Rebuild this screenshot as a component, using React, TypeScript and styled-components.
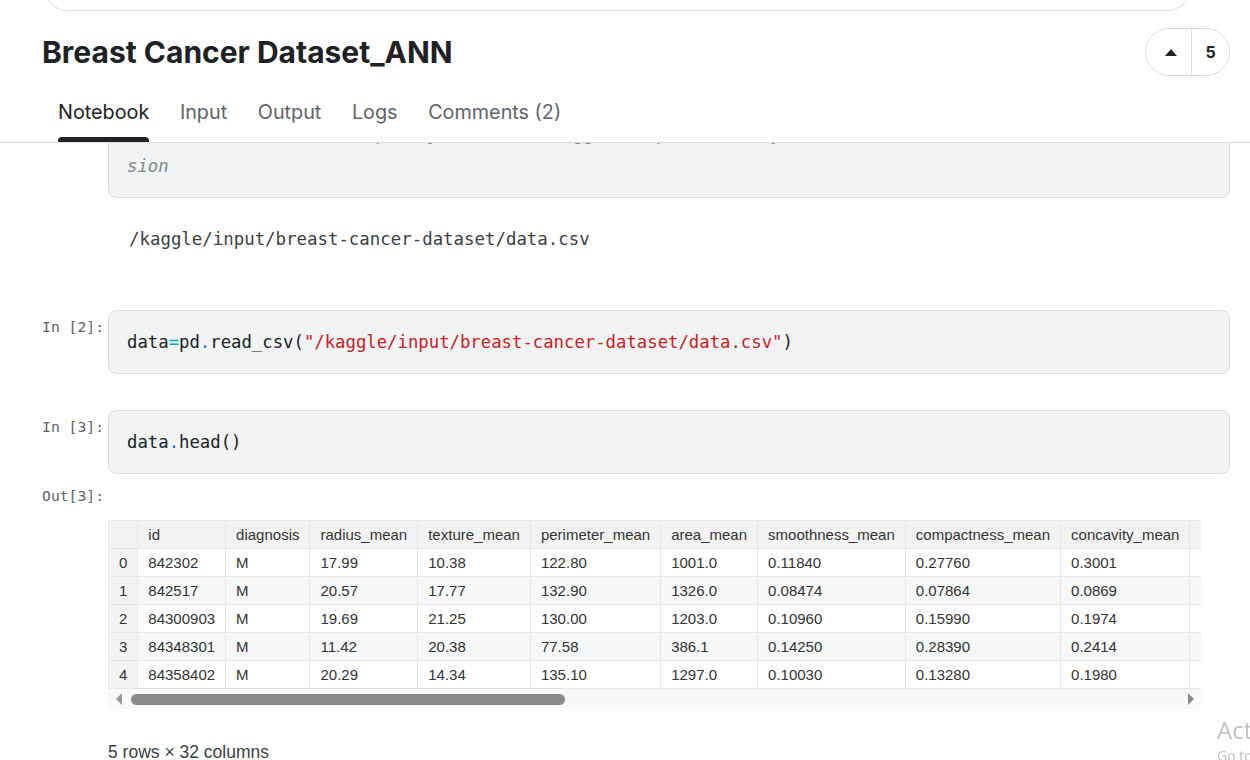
import React from "react";
import styled, { createGlobalStyle } from "styled-components";

const GlobalStyle = createGlobalStyle`
  html, body {
    margin: 0;
    padding: 0;
    background: #ffffff;
    overflow: hidden;
  }
  body {
    font-family: Inter, "Noto Sans", Arial, sans-serif;
    color: #202124;
  }
`;

const Page = styled.div`
  height: 760px;
  display: flex;
  flex-direction: column;
  overflow: hidden;
`;

const Header = styled.header`
  flex-shrink: 0;
  padding: 0 20px 0 42px;
  border-bottom: 1px solid #dadce0;
`;

const SearchBar = styled.div`
  height: 40px;
  margin: -30px 40px 0 3px;
  border: 1px solid #dadce0;
  border-top: none;
  border-radius: 0 0 22px 22px;
`;

const TitleRow = styled.div`
  margin-top: 17px;
  height: 48px;
  display: flex;
  align-items: center;
  justify-content: space-between;
`;

const Title = styled.h1`
  margin: 0;
  font-size: 30px;
  font-weight: 700;
  color: #202124;
`;

const VoteButton = styled.div`
  display: flex;
  height: 46px;
  border: 1px solid #dadce0;
  border-radius: 24px;
  overflow: hidden;
`;

const VoteHalf = styled.div<{ $wide?: boolean }>`
  width: ${(p) => (p.$wide ? "45px" : "37px")};
  display: flex;
  align-items: center;
  justify-content: center;
  font-size: 16px;
  font-weight: 700;
  color: #202124;
  & + & {
    border-left: 1px solid #dadce0;
  }
`;

const UpTriangle = styled.span`
  width: 0;
  height: 0;
  border-left: 6px solid transparent;
  border-right: 6px solid transparent;
  border-bottom: 7px solid #202124;
  margin-left: 4px;
`;

const Tabs = styled.nav`
  display: flex;
  gap: 30.6px;
  padding-left: 16px;
  height: 66px;
`;

const Tab = styled.div<{ $active?: boolean }>`
  position: relative;
  padding-top: 22px;
  line-height: 28px;
  font-size: 19.8px;
  color: ${(p) => (p.$active ? "#202124" : "#5f6368")};
  &::after {
    content: "";
    display: ${(p) => (p.$active ? "block" : "none")};
    position: absolute;
    left: 0;
    right: 0;
    bottom: 0;
    height: 5px;
    border-radius: 4px 4px 0 0;
    background: #202124;
  }
`;

const Main = styled.main`
  flex: 1;
  overflow: hidden;
`;

/* the notebook is scrolled a little: the first cell sits under the header */
const Scrolled = styled.div`
  margin-top: -37px;
  padding-right: 20px;
`;

const Row = styled.div<{ $gap?: number }>`
  display: flex;
  align-items: flex-start;
  margin-top: ${(p) => p.$gap ?? 0}px;
`;

const Prompt = styled.div`
  width: 104px;
  flex-shrink: 0;
  padding: 7px 4px 0 0;
  text-align: right;
  font-family: "DejaVu Sans Mono", "Liberation Mono", monospace;
  font-size: 14.7px;
  line-height: 20px;
  color: #5f6368;
  white-space: pre;
`;

const CodeCell = styled.div<{ $tight?: boolean }>`
  flex: 1;
  min-width: 0;
  background: #f1f3f4;
  border: 1px solid #dadce0;
  border-radius: 8px;
  padding: ${(p) => (p.$tight ? "13px 18px 17px" : "17px 18px")};
  font-family: "DejaVu Sans Mono", "Liberation Mono", monospace;
  font-size: 17.3px;
  line-height: 28px;
  color: #202124;
  white-space: pre;
  overflow: hidden;
`;

const CommentLine = styled.div<{ $lead?: boolean }>`
  color: #80868b;
  font-style: italic;
  margin-bottom: ${(p) => (p.$lead ? "4px" : "0")};
`;

const Op = styled.span`
  color: #12a4b8;
`;

const Dot = styled.span`
  color: #1a73e8;
`;

const Str = styled.span`
  color: #c5221f;
`;

const StreamText = styled.div`
  padding: 27px 0 0 21px;
  font-family: "DejaVu Sans Mono", "Liberation Mono", monospace;
  font-size: 17.4px;
  line-height: 28px;
  color: #3c4043;
  white-space: pre;
`;

const OutputBody = styled.div`
  flex: 1;
  min-width: 0;
  padding-top: 41px;
  margin-right: 29px;
`;

const TableScroll = styled.div`
  overflow: hidden;
`;

const Table = styled.table`
  border-collapse: collapse;
  font-family: "Liberation Sans", Arial, sans-serif;
  font-size: 15px;
  color: #333333;
  white-space: nowrap;

  th,
  td {
    height: 27px;
    padding: 0 10px;
    border: 1px solid #e6e6e6;
    text-align: left;
    font-weight: 400;
  }
  th:last-child,
  td:last-child {
    padding-left: 14px;
  }
  thead th {
    background: #f3f3f3;
  }
  tbody th {
    background: #f3f3f3;
  }
  tbody tr:nth-child(even) td {
    background: #f6f7f9;
  }
  tbody tr:nth-child(odd) td {
    background: #ffffff;
  }
`;

const ScrollTrack = styled.div`
  height: 20px;
  background: #f9f9f9;
  display: flex;
  align-items: center;
  padding: 0 7px 0 8px;
`;

const Arrow = styled.span<{ $dir: "left" | "right" }>`
  width: 0;
  height: 0;
  border-top: 6px solid transparent;
  border-bottom: 6px solid transparent;
  ${(p) =>
    p.$dir === "left"
      ? "border-right: 6px solid #9a9a9a;"
      : "border-left: 6px solid #8a8a8a;"}
`;

const Thumb = styled.div`
  width: 434px;
  height: 11px;
  margin-left: 9px;
  border-radius: 6px;
  background: #8b8b8b;
`;

const Spacer = styled.div`
  flex: 1;
`;

const Summary = styled.div`
  margin-top: 33px;
  font-family: "Liberation Sans", Arial, sans-serif;
  font-size: 17.5px;
  line-height: 20px;
  color: #3c4043;
`;

const Watermark = styled.div`
  position: fixed;
  left: 1217px;
  top: 714px;
  white-space: nowrap;
  font-family: "Open Sans", "Noto Sans", sans-serif;
  color: rgba(140, 140, 140, 0.55);
  pointer-events: none;
`;

const WatermarkTitle = styled.div`
  font-size: 24px;
  line-height: 32px;
`;

const WatermarkSub = styled.div`
  font-size: 14px;
  line-height: 20px;
`;

const columns = [
  "id",
  "diagnosis",
  "radius_mean",
  "texture_mean",
  "perimeter_mean",
  "area_mean",
  "smoothness_mean",
  "compactness_mean",
  "concavity_mean",
  "concave points_mean",
];

const rows = [
  ["842302", "M", "17.99", "10.38", "122.80", "1001.0", "0.11840", "0.27760", "0.3001", "0.14710"],
  ["842517", "M", "20.57", "17.77", "132.90", "1326.0", "0.08474", "0.07864", "0.0869", "0.07017"],
  ["84300903", "M", "19.69", "21.25", "130.00", "1203.0", "0.10960", "0.15990", "0.1974", "0.12790"],
  ["84348301", "M", "11.42", "20.38", "77.58", "386.1", "0.14250", "0.28390", "0.2414", "0.10520"],
  ["84358402", "M", "20.29", "14.34", "135.10", "1297.0", "0.10030", "0.13280", "0.1980", "0.10430"],
];

const tabs = ["Notebook", "Input", "Output", "Logs", "Comments (2)"];

const App: React.FunctionComponent = () => {
  return (
    <>
      <GlobalStyle />
      <Page>
        <Header>
          <SearchBar />
          <TitleRow>
            <Title>Breast Cancer Dataset_ANN</Title>
            <VoteButton>
              <VoteHalf $wide>
                <UpTriangle />
              </VoteHalf>
              <VoteHalf>5</VoteHalf>
            </VoteButton>
          </TitleRow>
          <Tabs>
            {tabs.map((t, i) => (
              <Tab key={t} $active={i === 0}>
                {t}
              </Tab>
            ))}
          </Tabs>
        </Header>

        <Main>
          <Scrolled>
            <Row>
              <Prompt>In [1]:</Prompt>
              <CodeCell $tight>
                <CommentLine $lead>
                  # You can also write temporary files to /kaggle/temp/, but they won't be saved outside of the current ses
                </CommentLine>
                <CommentLine>sion</CommentLine>
              </CodeCell>
            </Row>
            <Row>
              <Prompt />
              <StreamText>/kaggle/input/breast-cancer-dataset/data.csv</StreamText>
            </Row>

            <Row $gap={57}>
              <Prompt>In [2]:</Prompt>
              <CodeCell>
                data<Op>=</Op>pd<Dot>.</Dot>read_csv(
                <Str>"/kaggle/input/breast-cancer-dataset/data.csv"</Str>)
              </CodeCell>
            </Row>

            <Row $gap={36}>
              <Prompt>In [3]:</Prompt>
              <CodeCell>
                data<Dot>.</Dot>head()
              </CodeCell>
            </Row>

            <Row $gap={5}>
              <Prompt>Out[3]:</Prompt>
              <OutputBody>
                <TableScroll>
                  <Table>
                    <thead>
                      <tr>
                        <th></th>
                        {columns.map((c) => (
                          <th key={c}>{c}</th>
                        ))}
                      </tr>
                    </thead>
                    <tbody>
                      {rows.map((r, i) => (
                        <tr key={i}>
                          <th>{i}</th>
                          {r.map((v, j) => (
                            <td key={j}>{v}</td>
                          ))}
                        </tr>
                      ))}
                    </tbody>
                  </Table>
                </TableScroll>
                <ScrollTrack>
                  <Arrow $dir="left" />
                  <Thumb />
                  <Spacer />
                  <Arrow $dir="right" />
                </ScrollTrack>
                <Summary>5 rows × 32 columns</Summary>
              </OutputBody>
            </Row>
          </Scrolled>
        </Main>
      </Page>
      <Watermark>
        <WatermarkTitle>Activate Windows</WatermarkTitle>
        <WatermarkSub>Go to Settings to activate Windows.</WatermarkSub>
      </Watermark>
    </>
  );
};

export default App;
